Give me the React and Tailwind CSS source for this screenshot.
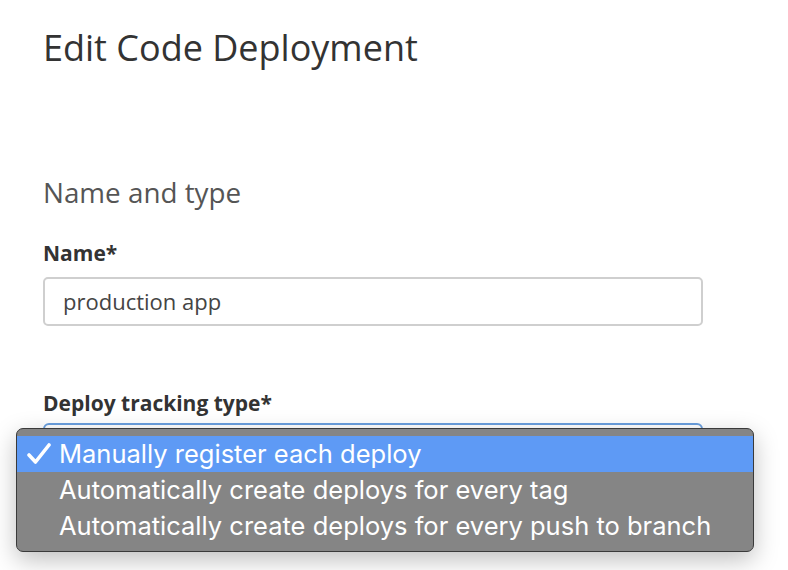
export default function App() {
  return (
    <div className="relative w-[788px] h-[570px] overflow-hidden bg-white" style={{ fontFamily: '"Open Sans", sans-serif' }}>
      <div className="pl-[43px] pt-[22px] w-[703px]">
        <h1 className="text-[36px] leading-[52px] text-[#333]">Edit Code Deployment</h1>
        <h2 className="mt-[100px] text-[27.8px] leading-[36px] text-[#555]">Name and type</h2>
        <div className="mt-[30px] text-[21px] leading-[26px] font-bold text-[#333]">Name*</div>
        <div className="mt-[11px] h-[49px] rounded-[5px] border-2 border-[#cfcfcf] flex items-center pl-[18px] text-[22px] text-[#444]">
          production app
        </div>
        <div className="mt-[64px] text-[21px] leading-[26px] font-bold text-[#333]">Deploy tracking type*</div>
        <div className="mt-[7px] h-[49px] rounded-[6px] border-2 border-[#6a9fde]"></div>
      </div>
      <div
        className="absolute left-[16px] top-[428px] w-[738px] h-[124px] rounded-[7px] border border-[#3a3a3a] bg-[#858585] py-[7px] shadow-[0_8px_24px_rgba(0,0,0,0.25)] text-white text-[25.5px]"
        style={{ fontFamily: 'Inter, "Liberation Sans", sans-serif' }}
      >
        <div className="h-[36px] bg-[#5e9af5] flex items-center">
          <svg width="24" height="22" viewBox="0 0 24 22" className="ml-[10px] mr-[8px]">
            <path d="M2 12 L8.5 19 L22 2" fill="none" stroke="white" strokeWidth="3.6" strokeLinecap="round" strokeLinejoin="round" />
          </svg>
          <span>Manually register each deploy</span>
        </div>
        <div className="h-[36px] flex items-center pl-[42px]">Automatically create deploys for every tag</div>
        <div className="h-[36px] flex items-center pl-[42px]">Automatically create deploys for every push to branch</div>
      </div>
    </div>
  );
}
